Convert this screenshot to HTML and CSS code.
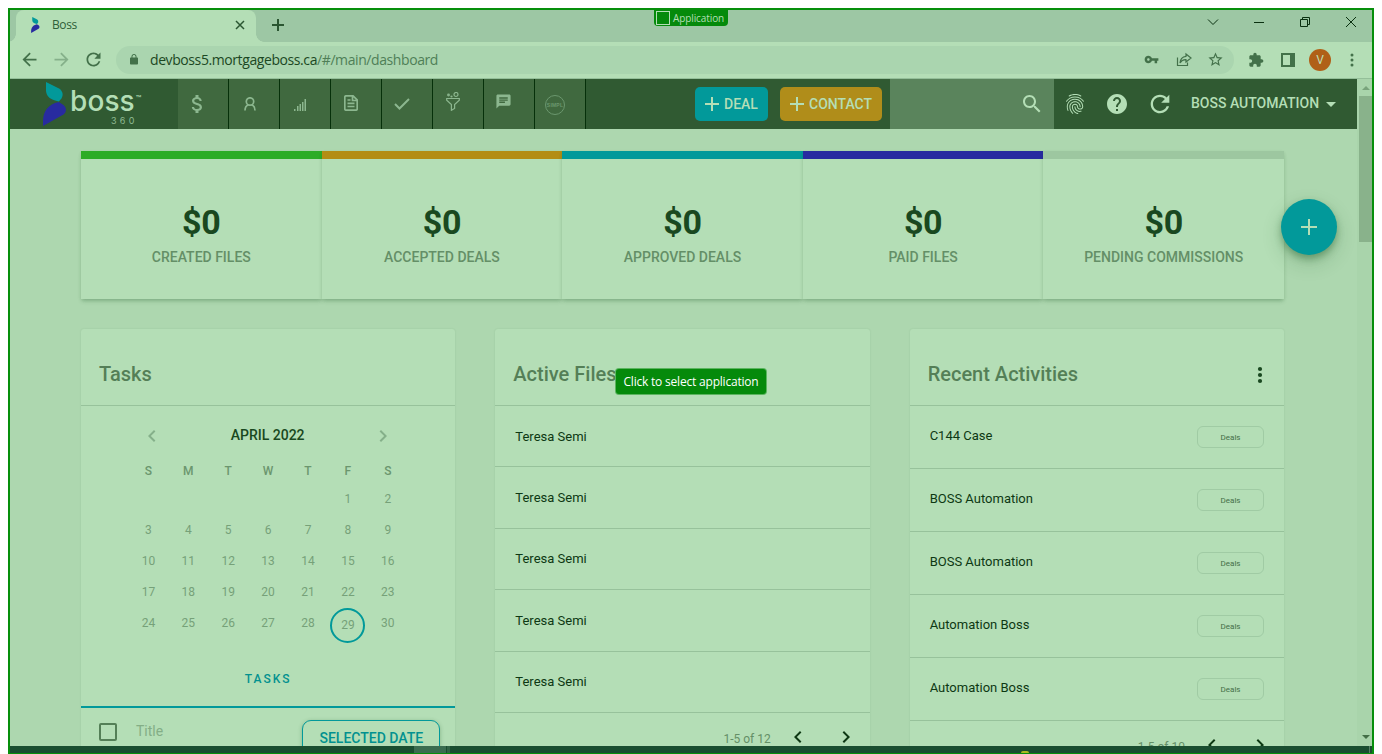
FILE: index.html
```
<!DOCTYPE html>
<html lang="en">
<head>
<meta charset="utf-8">
<title>Boss</title>
<link rel="stylesheet" href="styles.css">
</head>
<body>
<svg class="defs" width="0" height="0" aria-hidden="true">
  <symbol id="left" viewBox="0 0 24 24"><path d="M15.41 7.41L14 6l-6 6 6 6 1.41-1.41L10.83 12z"/></symbol>
  <symbol id="right" viewBox="0 0 24 24"><path d="M10 6L8.59 7.41 13.17 12l-4.58 4.59L10 18l6-6z"/></symbol>
  <symbol id="back" viewBox="0 0 24 24"><path d="M20 11H7.83l5.59-5.59L12 4l-8 8 8 8 1.41-1.41L7.83 13H20v-2z"/></symbol>
  <symbol id="refresh" viewBox="0 0 24 24"><path d="M17.65 6.35C16.2 4.9 14.21 4 12 4c-4.42 0-7.99 3.58-7.99 8s3.57 8 7.99 8c3.73 0 6.84-2.55 7.73-6h-2.08c-.82 2.33-3.04 4-5.65 4-3.31 0-6-2.69-6-6s2.69-6 6-6c1.66 0 3.14.69 4.22 1.78L13 11h7V4l-2.35 2.35z"/></symbol>
  <symbol id="mark" viewBox="0 0 24 44"><path fill="#02999a" d="M3 0L15.500 6.300C20 9 20.500 13 18.500 16.500L15.800 19.500C8 18 3.500 15 3 9Z"/><path fill="#282ba0" d="M15.800 20L20.500 23C24 26 23.500 30 20.500 32.500L0 44V38C0.500 29 5 22.500 15.800 20Z"/></symbol>
</svg>
<div class="frame">
  <div class="tabstrip">
    <div class="tab">
      <svg class="favicon" width="9" height="16"><use href="#mark"/></svg>
      <span class="tab-title">Boss</span>
      <svg class="tab-close" width="10" height="10" viewBox="0 0 10 10"><path d="M1 1l8 8M9 1L1 9"/></svg>
    </div>
    <svg class="newtab" width="12" height="12" viewBox="0 0 12 12"><path d="M6 0v12M0 6h12"/></svg>
    <div class="winbtns">
      <span><svg width="12" height="8" viewBox="0 0 12 8"><path d="M1 1.500l5 5 5-5"/></svg></span>
      <span><svg width="10" height="10" viewBox="0 0 10 10"><path d="M0 5.500h10"/></svg></span>
      <span><svg width="10" height="10" viewBox="0 0 10 10"><path d="M.5 2.500h7v7h-7zM2.500 2.500v-2h7v7h-2"/></svg></span>
      <span><svg width="10" height="10" viewBox="0 0 10 10"><path d="M0 0l10 10M10 0L0 10"/></svg></span>
    </div>
  </div>
  <div class="toolbar">
    <span class="tool nudge"><svg width="21" height="21"><use href="#back"/></svg></span>
    <span class="tool nudge faded"><svg class="flip" width="21" height="21"><use href="#back"/></svg></span>
    <span class="tool nudge"><svg width="21" height="21"><use href="#refresh"/></svg></span>
    <div class="omnibox">
      <svg class="lock" width="12" height="13" viewBox="0 0 24 24"><path d="M18 8h-1V6c0-2.760-2.240-5-5-5S7 3.240 7 6v2H6c-1.100 0-2 .9-2 2v10c0 1.100.9 2 2 2h12c1.100 0 2-.9 2-2V10c0-1.100-.9-2-2-2zm-2.900 0H8.900V6c0-1.710 1.390-3.100 3.100-3.100 1.710 0 3.100 1.390 3.100 3.100v2z"/></svg>
      <span class="url">devboss5.mortgageboss.ca<span class="path">/#/main/dashboard</span></span>
      <span class="tool nudge"><svg width="15" height="15" viewBox="0 0 24 24"><path d="M12.650 10C11.830 7.670 9.610 6 7 6c-3.310 0-6 2.690-6 6s2.690 6 6 6c2.610 0 4.830-1.670 5.650-4H17v4h4v-4h2v-4H12.650zM7 14c-1.100 0-2-.9-2-2s.9-2 2-2 2 .9 2 2-.9 2-2 2z"/></svg></span>
      <span class="tool"><svg class="line" width="16" height="16" viewBox="0 0 16 16"><path d="M1.500 5.500v8h10v-3M10 2l5 4-5 4V7.700C7.500 7.500 5.500 8.500 4 11c.3-4 2.500-6.300 6-6.700z"/></svg></span>
      <span class="tool nudge"><svg width="17" height="17" viewBox="0 0 24 24"><path d="M22 9.240l-7.190-.62L12 2 9.190 8.630 2 9.240l5.460 4.730L5.820 21 12 17.270 18.180 21l-1.630-7.030L22 9.240zM12 15.400l-3.760 2.270 1-4.280-3.320-2.880 4.380-.38L12 6.100l1.710 4.040 4.380.38-3.320 2.880 1 4.280L12 15.400z"/></svg></span>
    </div>
    <span class="tool ext"><svg width="16" height="16" viewBox="0 0 24 24"><path d="M20.500 11H19V7c0-1.100-.9-2-2-2h-4V3.500C13 2.120 11.880 1 10.500 1S8 2.120 8 3.500V5H4c-1.100 0-1.990.9-1.990 2v3.800H3.500c1.490 0 2.700 1.210 2.700 2.700s-1.210 2.700-2.700 2.700H2V20c0 1.100.9 2 2 2h3.800v-1.500c0-1.490 1.210-2.700 2.700-2.700 1.490 0 2.700 1.210 2.700 2.700V22H17c1.100 0 2-.9 2-2v-4h1.500c1.380 0 2.500-1.120 2.500-2.500S21.880 11 20.500 11z"/></svg></span>
    <span class="tool"><svg width="14" height="14" viewBox="0 0 14 14"><path fill-rule="evenodd" d="M0 0h14v14H0zM2 2v10h7V2z"/></svg></span>
    <span class="tool"><span class="avatar">V</span></span>
    <span class="tool"><svg width="4" height="14" viewBox="0 0 4 14"><circle cx="2" cy="2" r="1.500"/><circle cx="2" cy="7" r="1.500"/><circle cx="2" cy="12" r="1.500"/></svg></span>
  </div>

  <div class="viewport">
    <div class="page">
      <header class="appbar">
        <div class="logo">
          <svg width="24" height="44"><use href="#mark"/></svg>
          <div class="wordmark"><span class="name">boss<span class="tm">™</span></span><span class="num">360</span></div>
        </div>
        <nav class="nav">
          <a><svg width="24" height="24" viewBox="0 0 24 24"><path transform="translate(.5)" d="M11.800 10.900c-2.270-.59-3-1.200-3-2.150 0-1.090 1.010-1.850 2.700-1.850 1.780 0 2.440.85 2.500 2.100h2.210c-.07-1.720-1.120-3.300-3.210-3.810V3h-3v2.160c-1.940.42-3.500 1.680-3.500 3.610 0 2.310 1.910 3.460 4.700 4.130 2.500.6 3 1.480 3 2.410 0 .69-.49 1.790-2.700 1.790-2.060 0-2.870-.92-2.980-2.100h-2.200c.12 2.190 1.760 3.420 3.680 3.830V21h3v-2.150c1.950-.37 3.500-1.500 3.500-3.550 0-2.840-2.430-3.810-4.700-4.400z"/></svg></a>
          <a><svg class="line w15" width="12" height="14" viewBox="0 0 12 14"><circle cx="6" cy="4.500" r="3.700"/><path d="M1 13.500c0-3 1.500-5 3.500-5.700M11 13.500c0-3-1.500-5-3.500-5.700"/></svg></a>
          <a><svg class="bars" width="12" height="12" viewBox="0 0 12 12"><path d="M0 10h1.500v2H0zM3 7h1.500v5H3zM5.500 5H7v7H5.500zM8 3h1.500v9H8zM10.500 0H12v12h-1.500z"/></svg></a>
          <a><svg class="line w15" width="14" height="16" viewBox="0 0 14 16"><path d="M.8 2.200Q.8.800 2.200.8H9l4.200 4.200v8.800q0 1.400-1.400 1.400H2.200q-1.400 0-1.400-1.400zM8.500 1v4.500H13M3.500 5h3M3.500 8.300h7M3.500 11.500h7"/></svg></a>
          <a><svg class="line w2" width="16" height="12" viewBox="0 0 16 12"><path d="M1 6l4.500 4.500L15 1"/></svg></a>
          <a><svg class="line funnel" width="14" height="19" viewBox="0 0 14 19"><path d="M.7 6.500h12.600v1.700L8.600 12.500v4L5.400 18.300v-5.800L.7 8.200z"/><circle cx="10" cy="2.500" r="2"/><circle cx="2.500" cy="3" r=".8"/><circle cx="5.500" cy="4.500" r=".5"/></svg></a>
          <a><svg class="chat" width="17" height="17" viewBox="0 0 24 24"><path d="M20 2H4c-1.100 0-1.990.9-1.990 2L2 22l4-4h14c1.100 0 2-.9 2-2V4c0-1.100-.9-2-2-2zM6 9h12v2H6V9zm8 5H6v-2h8v2zm4-6H6V6h12v2z"/></svg></a>
          <a><span class="simpl">SIMPL</span></a>
        </nav>
        <div class="actions">
          <button class="btn deal"><svg width="14" height="14" viewBox="0 0 14 14"><path d="M7 0v14M0 7h14"/></svg>DEAL</button>
          <button class="btn contact"><svg width="14" height="14" viewBox="0 0 14 14"><path d="M7 0v14M0 7h14"/></svg>CONTACT</button>
        </div>
        <div class="search"><svg width="24" height="24" viewBox="0 0 24 24"><path d="M15.500 14h-.79l-.28-.27C15.410 12.590 16 11.110 16 9.500 16 5.910 13.090 3 9.500 3S3 5.910 3 9.500 5.910 16 9.500 16c1.610 0 3.090-.59 4.230-1.570l.27.28v.79l5 4.990L20.490 19l-4.990-5zm-6 0C7.010 14 5 11.990 5 9.500S7.010 5 9.500 5 14 7.010 14 9.500 11.990 14 9.500 14z"/></svg></div>
        <div class="utils">
          <svg width="24" height="24" viewBox="0 0 24 24"><path d="M17.810 4.470c-.08 0-.16-.02-.23-.06C15.660 3.420 14 3 12.010 3c-1.980 0-3.860.47-5.570 1.410-.24.13-.54.04-.68-.2-.13-.24-.04-.55.2-.68C7.820 2.520 9.860 2 12.010 2c2.130 0 3.990.47 6.030 1.520.25.13.34.43.21.67-.09.18-.26.28-.44.28zM3.500 9.720c-.1 0-.2-.03-.29-.09-.23-.16-.28-.47-.12-.7.99-1.400 2.250-2.500 3.750-3.270C9.980 4.040 14 4.030 17.150 5.650c1.500.77 2.760 1.860 3.750 3.250.16.22.11.54-.12.7-.23.16-.54.11-.7-.12-.9-1.260-2.040-2.250-3.390-2.940-2.870-1.470-6.540-1.470-9.400.01-1.360.7-2.500 1.700-3.400 2.960-.08.14-.23.21-.39.21zm6.250 12.070c-.13 0-.26-.05-.35-.15-.87-.87-1.340-1.430-2.010-2.640-.69-1.230-1.050-2.730-1.050-4.340 0-2.970 2.540-5.390 5.660-5.390s5.660 2.420 5.660 5.390c0 .28-.22.5-.5.5s-.5-.22-.5-.5c0-2.420-2.090-4.390-4.660-4.390-2.570 0-4.660 1.970-4.660 4.390 0 1.440.32 2.770.93 3.850.64 1.150 1.080 1.640 1.850 2.420.19.2.19.51 0 .71-.11.1-.24.15-.37.15zm7.170-1.850c-1.190 0-2.240-.3-3.100-.89-1.490-1.010-2.380-2.650-2.380-4.390 0-.28.22-.5.5-.5s.5.22.5.5c0 1.410.72 2.740 1.940 3.560.71.48 1.540.71 2.540.71.24 0 .64-.03 1.040-.1.27-.05.53.13.58.41.05.27-.13.53-.41.58-.57.11-1.070.12-1.210.12zM14.910 22c-.04 0-.09-.01-.13-.02-1.590-.44-2.630-1.030-3.720-2.100-1.400-1.390-2.170-3.240-2.170-5.220 0-1.620 1.380-2.940 3.080-2.940 1.700 0 3.080 1.320 3.080 2.940 0 1.070.93 1.940 2.080 1.940s2.080-.87 2.080-1.940c0-3.770-3.250-6.830-7.250-6.830-2.840 0-5.440 1.580-6.610 4.030-.39.81-.59 1.760-.59 2.800 0 .78.07 2.010.67 3.610.1.26-.03.55-.29.64-.26.1-.55-.04-.64-.29-.49-1.310-.73-2.610-.73-3.960 0-1.200.23-2.290.68-3.240 1.330-2.790 4.280-4.600 7.510-4.600 4.550 0 8.250 3.510 8.250 7.830 0 1.620-1.380 2.940-3.080 2.940s-3.080-1.320-3.080-2.940c0-1.070-.93-1.940-2.080-1.940s-2.080.87-2.080 1.940c0 1.710.66 3.310 1.870 4.510.95.94 1.860 1.460 3.270 1.850.27.07.42.35.35.61-.05.23-.26.38-.47.38z"/></svg>
          <svg width="24" height="24" viewBox="0 0 24 24"><path d="M12 2C6.480 2 2 6.480 2 12s4.480 10 10 10 10-4.480 10-10S17.520 2 12 2zm1 17h-2v-2h2v2zm2.070-7.750l-.9.920C13.450 12.900 13 13.500 13 15h-2v-.5c0-1.100.45-2.100 1.170-2.830l1.240-1.260c.37-.36.59-.86.59-1.410 0-1.100-.9-2-2-2s-2 .9-2 2H8c0-2.210 1.790-4 4-4s4 1.790 4 4c0 .88-.36 1.680-.93 2.250z"/></svg>
          <svg width="28" height="28"><use href="#refresh"/></svg>
          <span class="user">BOSS AUTOMATION</span>
          <svg class="caret" width="10" height="5" viewBox="0 0 10 5"><path d="M0 0h10L5 5z"/></svg>
        </div>
      </header>

      <main class="content">
        <section class="stats">
          <div class="stat green"><b>$0</b><span>CREATED FILES</span></div>
          <div class="stat amber"><b>$0</b><span>ACCEPTED DEALS</span></div>
          <div class="stat teal"><b>$0</b><span>APPROVED DEALS</span></div>
          <div class="stat navy"><b>$0</b><span>PAID FILES</span></div>
          <div class="stat grey"><b>$0</b><span>PENDING COMMISSIONS</span></div>
        </section>
        <section class="cards">
          <article class="card">
            <h2>Tasks</h2>
            <div class="month"><svg width="24" height="24"><use href="#left"/></svg><span>APRIL 2022</span><svg width="24" height="24"><use href="#right"/></svg></div>
            <div class="week"><span>S</span><span>M</span><span>T</span><span>W</span><span>T</span><span>F</span><span>S</span></div>
            <div class="days">
              <span class="first">1</span><span>2</span>
              <span>3</span><span>4</span><span>5</span><span>6</span><span>7</span><span>8</span><span>9</span>
              <span>10</span><span>11</span><span>12</span><span>13</span><span>14</span><span>15</span><span>16</span>
              <span>17</span><span>18</span><span>19</span><span>20</span><span>21</span><span>22</span><span>23</span>
              <span>24</span><span>25</span><span>26</span><span>27</span><span>28</span><span><i class="today">29</i></span><span>30</span>
            </div>
            <div class="tasktab">TASKS</div>
            <div class="taskhead"><span class="check"></span><span class="title">Title</span><button class="selected">SELECTED DATE</button></div>
          </article>
          <article class="card files">
            <h2>Active Files</h2>
            <div class="row">Teresa Semi</div>
            <div class="row">Teresa Semi</div>
            <div class="row">Teresa Semi</div>
            <div class="row">Teresa Semi</div>
            <div class="row">Teresa Semi</div>
            <div class="pager"><span>1-5 of 12</span><svg width="24" height="24"><use href="#left"/></svg><svg width="24" height="24"><use href="#right"/></svg></div>
          </article>
          <article class="card recent">
            <h2>Recent Activities<svg width="6" height="18" viewBox="0 0 6 18"><circle cx="3" cy="3" r="2.100"/><circle cx="3" cy="9" r="2.100"/><circle cx="3" cy="15" r="2.100"/></svg></h2>
            <div class="row"><span>C144 Case</span><span class="chip">Deals</span></div>
            <div class="row"><span>BOSS Automation</span><span class="chip">Deals</span></div>
            <div class="row"><span>BOSS Automation</span><span class="chip">Deals</span></div>
            <div class="row"><span>Automation Boss</span><span class="chip">Deals</span></div>
            <div class="row"><span>Automation Boss</span><span class="chip">Deals</span></div>
            <div class="pager"><span>1-5 of 10</span><svg width="24" height="24"><use href="#left"/></svg><svg width="24" height="24"><use href="#right"/></svg></div>
          </article>
        </section>
      </main>
      <button class="fab"><svg width="16" height="16" viewBox="0 0 16 16"><path d="M8 0v16M0 8h16"/></svg></button>
    </div>
    <div class="scrollbar">
      <svg class="up" width="8" height="4" viewBox="0 0 8 4"><path d="M0 4h8L4 0z"/></svg>
      <div class="thumb"></div>
      <svg class="down" width="8" height="4" viewBox="0 0 8 4"><path d="M0 0h8L4 4z"/></svg>
    </div>
  </div>
  <div class="taskbar"><span class="task"></span><span class="task-edge"></span><span class="tray"></span><span class="show-desktop"></span></div>
  <div class="badge"><span class="badge-box"></span>Application</div>
  <div class="tooltip">Click to select application</div>
</div>
</body>
</html>
```
FILE: styles.css
```
* { box-sizing: border-box; }
html, body { height: 100%; }
body {
  margin: 0;
  padding: 8px 8px 0;
  overflow: hidden;
  background: #fff;
  font-family: Roboto, "Liberation Sans", sans-serif;
}
svg { display: block; flex: none; fill: currentColor; }
.defs { position: absolute; }
button { font: inherit; border: 0; padding: 0; }

.frame {
  position: relative;
  display: flex;
  flex-direction: column;
  height: 746px;
  border: 2px solid #068f0c;
  border-bottom-width: 1px;
  background: #b4deb6;
  overflow: hidden;
}

/* Browser chrome */
.tabstrip { display: flex; height: 32px; flex: none; padding-left: 6px; background: #9dc7a4; }
.tab {
  position: relative;
  display: flex;
  align-items: center;
  width: 240px;
  height: 32px;
  padding: 0 11px 2px 15px;
  border-radius: 8px 8px 0 0;
  background: #b4deb6;
}
.tab::before, .tab::after { content: ""; position: absolute; bottom: 0; width: 8px; height: 8px; }
.tab::before { right: 100%; background: radial-gradient(circle at 0 0, transparent 7.500px, #b4deb6 8px); }
.tab::after { left: 100%; background: radial-gradient(circle at 100% 0, transparent 7.500px, #b4deb6 8px); }
.tab-title { flex: 1; margin-left: 12px; padding-bottom: 1px; font: 12px "Open Sans", sans-serif; letter-spacing: -.4px; color: #2f5f39; }
.tab-close { stroke: #2b5632; stroke-width: 1.500; }
.newtab { margin: 9px 0 0 16px; stroke: #2b5632; stroke-width: 2; }
.winbtns { display: flex; margin-left: auto; margin-right: -2px; height: 24px; }
.winbtns span { display: flex; align-items: center; justify-content: center; width: 46px; }
.winbtns svg { fill: none; stroke: #0a3010; }

.toolbar {
  display: flex;
  align-items: center;
  flex: none;
  height: 37px;
  padding-left: 4px;
  color: #43714a;
  border-bottom: 1px solid #94bf99;
}
.tool { display: flex; align-items: center; justify-content: center; width: 32px; height: 28px; }
.nudge { padding: 0 1px 1px 0; }
.faded { color: #85b08a; }
.flip { transform: scaleX(-1); }
.line { fill: none; stroke: currentColor; stroke-width: 1.200; }
.w15 { stroke-width: 1.700; }
.w2 { stroke-width: 2; }
.omnibox {
  display: flex;
  align-items: center;
  width: 1118px;
  height: 28px;
  margin-left: 6px;
  padding: 0 2px 0 12px;
  border-radius: 14px;
  background: #aad5af;
}
.lock { margin-bottom: 1px; }
.url { flex: 1; margin-left: 10px; padding-bottom: 1px; font: 14px "Open Sans", sans-serif; letter-spacing: -.41px; color: #1c4823; white-space: nowrap; }
.path { color: #4f7f57; }
.ext { margin-left: 6px; }
.avatar { width: 22px; height: 22px; border-radius: 50%; background: #b06018; color: #c0dfb4; font-size: 12px; line-height: 22px; text-align: center; }

/* Page */
.viewport { display: flex; flex: 1; min-height: 0; background: #add7af; }
.page { position: relative; width: 1347px; overflow: hidden; }
.appbar { display: flex; height: 50px; background: #305a32; color: #b4deb6; }
.logo { display: flex; width: 168px; padding: 3px 0 0 33px; }
.wordmark { display: flex; flex-direction: column; width: 76px; margin: 1px 0 0 3px; }
.name { display: flex; height: 33px; font: 500 28px/36px Inter, sans-serif; letter-spacing: .1px; }
.tm { font-size: 9px; line-height: 31px; margin-left: 1px; }
.num { margin-left: 41px; font: 9px/9px Inter, sans-serif; letter-spacing: 3.300px; color: #8fbb92; }
.nav { display: flex; color: #8cb78f; }
.nav a { display: flex; align-items: center; justify-content: center; width: 51px; padding-right: 12px; border-right: 1px solid #06300a; background: #40693f; }
.nav a:nth-child(2) { padding-right: 9px; }
.nav a:nth-child(3) { padding-right: 10px; }
.nav a:nth-child(4) { padding-right: 10px; padding-bottom: 2px; }
.nav a:nth-child(5) { padding-right: 10px; }
.nav a:nth-child(6) { padding-right: 10px; padding-bottom: 6px; }
.nav a:nth-child(7) { padding-right: 11px; padding-bottom: 5px; }
.nav a:nth-child(8) { padding-right: 10px; }
.bars { margin-top: 1px; }
.simpl { width: 20px; height: 20px; margin-top: 1px; border: 1px solid #6b976e; border-radius: 50%; font: 700 5px/18px "Liberation Sans", sans-serif; text-align: center; color: #6b976e; letter-spacing: .2px; }
.actions { display: flex; align-items: center; gap: 12px; margin-left: auto; padding-right: 8px; }
.btn { display: flex; align-items: center; height: 34px; padding-left: 10px; border-radius: 5px; color: #b4deb6; font-size: 14px; font-weight: 500; gap: 5px; }
.btn svg { stroke: currentColor; stroke-width: 2; }
.deal { width: 73px; background: #02999a; }
.contact { width: 102px; background: #b08d1a; }
.search { display: flex; align-items: center; justify-content: flex-end; width: 164px; padding-right: 10px; background: #5a845c; }
.utils { display: flex; align-items: center; width: 303px; padding-left: 9px; }
.utils svg:nth-child(2) { margin-left: 18px; }
.utils svg:nth-child(3) { margin-left: 17px; }
.user { margin-left: 17px; margin-top: -2px; font-size: 14px; font-weight: 500; white-space: nowrap; }
.caret { margin-left: 7px; margin-top: 1px; }

.content { padding: 22px 73px 0 71px; }
.stats { display: grid; grid-template-columns: repeat(5, 1fr); height: 148px; }
.stat {
  display: flex;
  flex-direction: column;
  align-items: center;
  padding-top: 43px;
  border-top: 8px solid;
  background: #b4deb6;
  box-shadow: 0 3px 4px -1px rgba(20, 80, 30, .25), 0 1px 3px rgba(20, 80, 30, .08);
}
.stat b { font-size: 34px; line-height: 40px; font-weight: 700; letter-spacing: -.3px; color: #194820; }
.stat span { margin-top: 7px; font-size: 14px; line-height: 16px; font-weight: 500; color: #648f67; }
.green { border-color: #2cac26; }
.amber { border-color: #b38d15; }
.teal { border-color: #02999a; }
.navy { border-color: #282ba0; }
.grey { border-color: #9dc7a0; }

.cards { display: grid; grid-template-columns: repeat(3, 1fr); gap: 40px; margin-top: 30px; }
.card { height: 520px; border-radius: 3px; background: #b4deb6; box-shadow: 0 0 2px rgba(20, 80, 30, .12); }
.card h2 { display: flex; justify-content: space-between; height: 77px; margin: 0; padding: 33px 21px 0 18px; border-bottom: 1px solid #97c29b; font-size: 20px; line-height: 24px; font-weight: 500; color: #547f57; }
.card h2 svg { margin-top: 4px; color: #194820; }
.month { display: flex; align-items: center; justify-content: space-between; height: 24px; margin: 18px 60px 0 59px; color: #85b08a; }
.month span { color: #194820; font-size: 14px; font-weight: 500; line-height: 20px; padding-bottom: 2px; }
.week, .days { display: grid; grid-template-columns: repeat(7, 39.900px); margin-left: 47.500px; text-align: center; font-size: 12px; }
.week { margin-top: 15px; line-height: 16px; font-weight: 500; color: #6b966e; }
.days { margin-top: 5px; grid-auto-rows: 31px; line-height: 31px; color: #76a179; }
.first { grid-column: 6; }
.today { display: block; width: 35px; height: 35px; margin: 0 auto; border: 2px solid #02999a; border-radius: 50%; line-height: 31px; font-style: normal; }
.tasktab { height: 57px; margin-top: 12px; border-bottom: 2px solid #02999a; color: #02918f; font-size: 12px; font-weight: 500; letter-spacing: 2px; text-align: center; line-height: 56px; }
.taskhead { display: flex; padding: 12px 15px 0 18px; }
.check { width: 18px; height: 18px; margin-top: 3px; border: 2px solid #547f57; border-radius: 2px; }
.title { margin: 2px 0 0 19px; font-size: 14px; line-height: 18px; color: #83ae86; }
.selected { width: 138px; height: 36px; margin-left: auto; border: 1px solid #02999a; border-radius: 9px; background: #b4deb6; color: #02918f; font-size: 14px; font-weight: 500; line-height: 34px; box-shadow: 0 1px 4px rgba(20, 80, 30, .3); }
.row { display: flex; align-items: center; justify-content: space-between; padding: 0 20px; border-bottom: 1px solid #97c29b; font-size: 13px; color: #0d3813; }
.files .row { height: 61.400px; }
.recent .row { height: 63px; }
.recent .row > span:first-child { padding-bottom: 3px; }
.chip { width: 67px; height: 22px; border: 1px solid #a0cba4; border-radius: 6px; font-size: 8px; line-height: 21px; text-align: center; color: #456f48; }
.pager { display: flex; align-items: center; justify-content: flex-end; height: 48px; padding: 0 12px 0 0; gap: 24px; color: #0d3813; }
.pager span { margin-right: -9px; padding-top: 4px; font-size: 12px; color: #648f67; }

.fab { position: absolute; left: 1271px; top: 120px; display: flex; align-items: center; justify-content: center; width: 56px; height: 56px; border-radius: 50%; background: #02999a; color: #b4deb6; box-shadow: 0 4px 7px rgba(20, 80, 30, .35), 0 8px 20px rgba(20, 80, 30, .2); }
.fab svg { stroke: currentColor; stroke-width: 2; }

.scrollbar { display: flex; flex-direction: column; align-items: center; width: 15px; padding: 7px 0 7px 2px; background: #a9d4ab; color: #78a37b; }
.thumb { align-self: stretch; height: 146px; margin-top: 6px; background: #89b28b; }
.down { margin-top: auto; color: #436e46; }

.taskbar { display: flex; flex: none; height: 7px; background: #1a4e30; }
.task { width: 32px; margin-left: 404px; background: #3b6d50; }
.task-edge { width: 3px; margin-left: 1px; background: #316345; }
.tray { width: 8px; height: 2px; margin: 5px 0 0 571px; border-radius: 4px 4px 0 0; background: #aaba20; }
.show-desktop { width: 1px; margin-left: auto; margin-right: 2px; background: #568066; }

/* Selection overlay */
.badge { position: absolute; left: 644px; top: 0; display: flex; align-items: center; width: 74px; height: 16px; padding-left: 2px; border-radius: 0 0 4px 4px; background: #058a0b; color: #b4deb6; font: 10px/16px "Open Sans", sans-serif; letter-spacing: -.1px; white-space: nowrap; }
.badge-box { width: 14px; height: 14px; margin-right: 3px; border: 1px solid #b4deb6; }
.tooltip { position: absolute; left: 606px; top: 359px; width: 150px; height: 25px; border-radius: 3px; background: #058a0b; box-shadow: 0 0 0 1px #5bb55f; color: #fff; font: 12px/26px "Open Sans", sans-serif; letter-spacing: -.2px; text-align: center; white-space: nowrap; }
```
